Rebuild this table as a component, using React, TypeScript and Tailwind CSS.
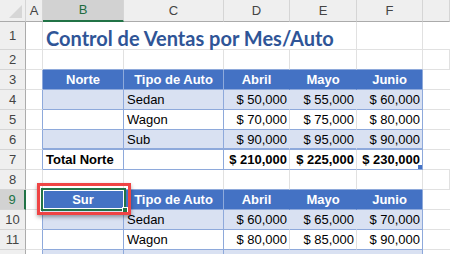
import React from 'react';

const font = { fontFamily: '"Liberation Sans", Arial, sans-serif' };

const colLetters = ['A', 'B', 'C', 'D', 'E', 'F', ''];
const colW = ['w-[17px]', 'w-[81px]', 'w-[100px]', 'w-[66px]', 'w-[67px]', 'w-[66px]', 'flex-1'];

function RowHead({ n, h, active }: { n?: number; h: string; active?: boolean }) {
  return (
    <div
      className={`${h} w-[26px] shrink-0 flex items-center justify-center text-[13px] border-b border-[#d5d5d5] ${
        active ? 'bg-[#d2d2d2] text-[#217346] border-r-2 border-r-[#217346]' : 'bg-[#efefef] text-[#444] border-r border-r-[#ababab]'
      }`}
    >
      {n}
    </div>
  );
}

// one table body row (cols B-F)
function DataRow({
  n,
  band,
  tipo,
  vals,
  last,
}: {
  n?: number;
  band: boolean;
  tipo: string;
  vals: string[];
  last?: boolean;
}) {
  const bg = band ? 'bg-[#d9e1f2]' : 'bg-white';
  const inner = band ? 'border-r-[#d9e1f2]' : 'border-r-[#e1e1e1]';
  const bb = last ? 'border-b-2' : 'border-b';
  return (
    <div className="flex h-[20px]">
      <RowHead n={n} h="h-[20px]" />
      <div className="w-[17px] h-full border-r border-r-[#8ea9db] border-b border-b-[#e1e1e1]" />
      <div className={`w-[81px] h-full ${bg} border-r border-r-[#8ea9db] ${bb} border-b-[#8ea9db]`} />
      <div className={`w-[100px] h-full ${bg} border-r border-r-[#8ea9db] ${bb} border-b-[#8ea9db] px-[3px] text-[13px] leading-[19px]`}>
        {tipo}
      </div>
      {vals.map((v, i) => (
        <div
          key={i}
          className={`${colW[i + 3]} h-full ${bg} border-r ${i === 2 ? 'border-r-[#8ea9db]' : inner} ${bb} border-b-[#8ea9db] pr-[2px] text-right text-[13px] leading-[19px]`}
        >
          {v}
        </div>
      ))}
      <div className="flex-1 h-full border-b border-b-[#e1e1e1]" />
    </div>
  );
}

function HeaderRow({ n, first, selected }: { n: number; first: string; selected?: boolean }) {
  const heads = ['Tipo de Auto', 'Abril', 'Mayo', 'Junio'];
  return (
    <div className="flex h-[20px]">
      <RowHead n={n} h="h-[20px]" active={selected} />
      <div className="w-[17px] h-full border-r border-r-[#8ea9db] border-b border-b-[#e1e1e1]" />
      <div className="w-[81px] h-full bg-[#4472c4] border-r border-r-[#8eaadb] border-b border-b-[#8ea9db] text-white font-bold text-[13px] leading-[19px] text-center">
        {first}
      </div>
      {heads.map((t, i) => (
        <div
          key={t}
          className={`${colW[i + 2]} h-full bg-[#4472c4] border-r ${
            i === 0 || i === 3 ? 'border-r-[#8eaadb]' : 'border-r-[#4472c4]'
          } border-b border-b-[#8ea9db] text-white font-bold text-[13px] leading-[19px] text-center`}
        >
          {t}
        </div>
      ))}
      <div className="flex-1 h-full border-b border-b-[#e1e1e1]" />
    </div>
  );
}

function PlainRow({ n, blueBottom }: { n: number; blueBottom?: boolean }) {
  return (
    <div className="flex h-[20px]">
      <RowHead n={n} h="h-[20px]" />
      {colW.map((w, i) => (
        <div
          key={i}
          className={`${w} h-full border-r border-r-[#e1e1e1] border-b ${
            blueBottom && i > 0 && i < 6 ? 'border-b-[#8ea9db]' : 'border-b-[#e1e1e1]'
          }`}
        />
      ))}
    </div>
  );
}

export default function App() {
  return (
    <div className="w-[450px] h-[254px] overflow-hidden bg-white relative text-black" style={font}>
      {/* column headers */}
      <div className="flex h-[22px]">
        <div className="w-[26px] h-full bg-[#efefef] border-r border-r-[#d5d5d5] border-b border-b-[#ababab] relative">
          <svg className="absolute right-[3px] bottom-[3px]" width="13" height="13" viewBox="0 0 13 13">
            <polygon points="13,0 13,13 0,13" fill="#d6d6d6" />
          </svg>
        </div>
        {colLetters.map((c, i) => (
          <div
            key={i}
            className={`${colW[i]} h-full flex items-center justify-center text-[13px] border-r border-r-[#d5d5d5] ${
              c === 'B'
                ? 'bg-[#d2d2d2] text-[#1e6b40] border-b-2 border-b-[#217346]'
                : 'bg-[#efefef] text-[#444] border-b border-b-[#ababab]'
            }`}
          >
            {c}
          </div>
        ))}
      </div>

      {/* row 1: title */}
      <div className="flex h-[28px]">
        <RowHead n={1} h="h-[28px]" />
        <div className="w-[17px] h-full border-r border-b border-[#e1e1e1]" />
        <div className="w-[314px] h-full border-r border-b border-[#e1e1e1] relative">
          <span className="absolute left-[3px] top-[1px] whitespace-nowrap font-bold text-[#2f5597] text-[20px]" style={{ fontFamily: 'Lato, sans-serif' }}>
            Control de Ventas por Mes/Auto
          </span>
        </div>
        <div className="w-[66px] h-full border-r border-b border-[#e1e1e1]" />
        <div className="flex-1 h-full border-b border-[#e1e1e1]" />
      </div>

      <PlainRow n={2} blueBottom />
      <HeaderRow n={3} first="Norte" />
      <DataRow n={4} band tipo="Sedan" vals={['$ 50,000', '$ 55,000', '$ 60,000']} />
      <DataRow n={5} band={false} tipo="Wagon" vals={['$ 70,000', '$ 75,000', '$ 80,000']} />
      <DataRow n={6} band tipo="Sub" vals={['$ 90,000', '$ 95,000', '$ 90,000']} last />

      {/* row 7: totals */}
      <div className="flex h-[20px]">
        <RowHead n={7} h="h-[20px]" />
        <div className="w-[17px] h-full border-r border-r-[#8ea9db] border-b border-b-[#e1e1e1]" />
        <div className="w-[81px] h-full border-r border-r-[#8ea9db] border-b border-b-[#8ea9db] px-[3px] font-bold text-[13px] leading-[19px]">
          Total Norte
        </div>
        <div className="w-[100px] h-full border-r border-r-[#8ea9db] border-b border-b-[#8ea9db]" />
        {['$ 210,000', '$ 225,000', '$ 230,000'].map((v, i) => (
          <div
            key={v}
            className={`${colW[i + 3]} h-full border-r ${i === 2 ? 'border-r-[#8ea9db] relative' : 'border-r-[#e1e1e1]'} border-b border-b-[#8ea9db] pr-[2px] text-right font-bold text-[13px] leading-[19px]`}
          >
            {v}
            {i === 2 && <span className="absolute right-0 bottom-0 w-[4px] h-[4px] bg-[#4472c4]" />}
          </div>
        ))}
        <div className="flex-1 h-full border-b border-b-[#e1e1e1]" />
      </div>

      <PlainRow n={8} blueBottom />
      <HeaderRow n={9} first="Sur" selected />
      <DataRow n={10} band tipo="Sedan" vals={['$ 60,000', '$ 65,000', '$ 70,000']} />
      <DataRow n={11} band={false} tipo="Wagon" vals={['$ 80,000', '$ 85,000', '$ 90,000']} />
      <DataRow band tipo="" vals={['', '', '']} />

      {/* active cell B9 selection */}
      <div className="absolute left-[41px] top-[188px] w-[85px] h-[23px] border-2 border-[#217346]">
        <div className="w-full h-full border border-white" />
        <span className="absolute right-[-4px] bottom-[-4px] w-[6px] h-[6px] bg-[#217346] border border-white" />
      </div>
      {/* red highlight */}
      <div className="absolute left-[37px] top-[183px] w-[94px] h-[32px] border-[3px] border-[#ef4444] shadow-[0_2px_4px_rgba(0,0,0,0.35)]" />
    </div>
  );
}
